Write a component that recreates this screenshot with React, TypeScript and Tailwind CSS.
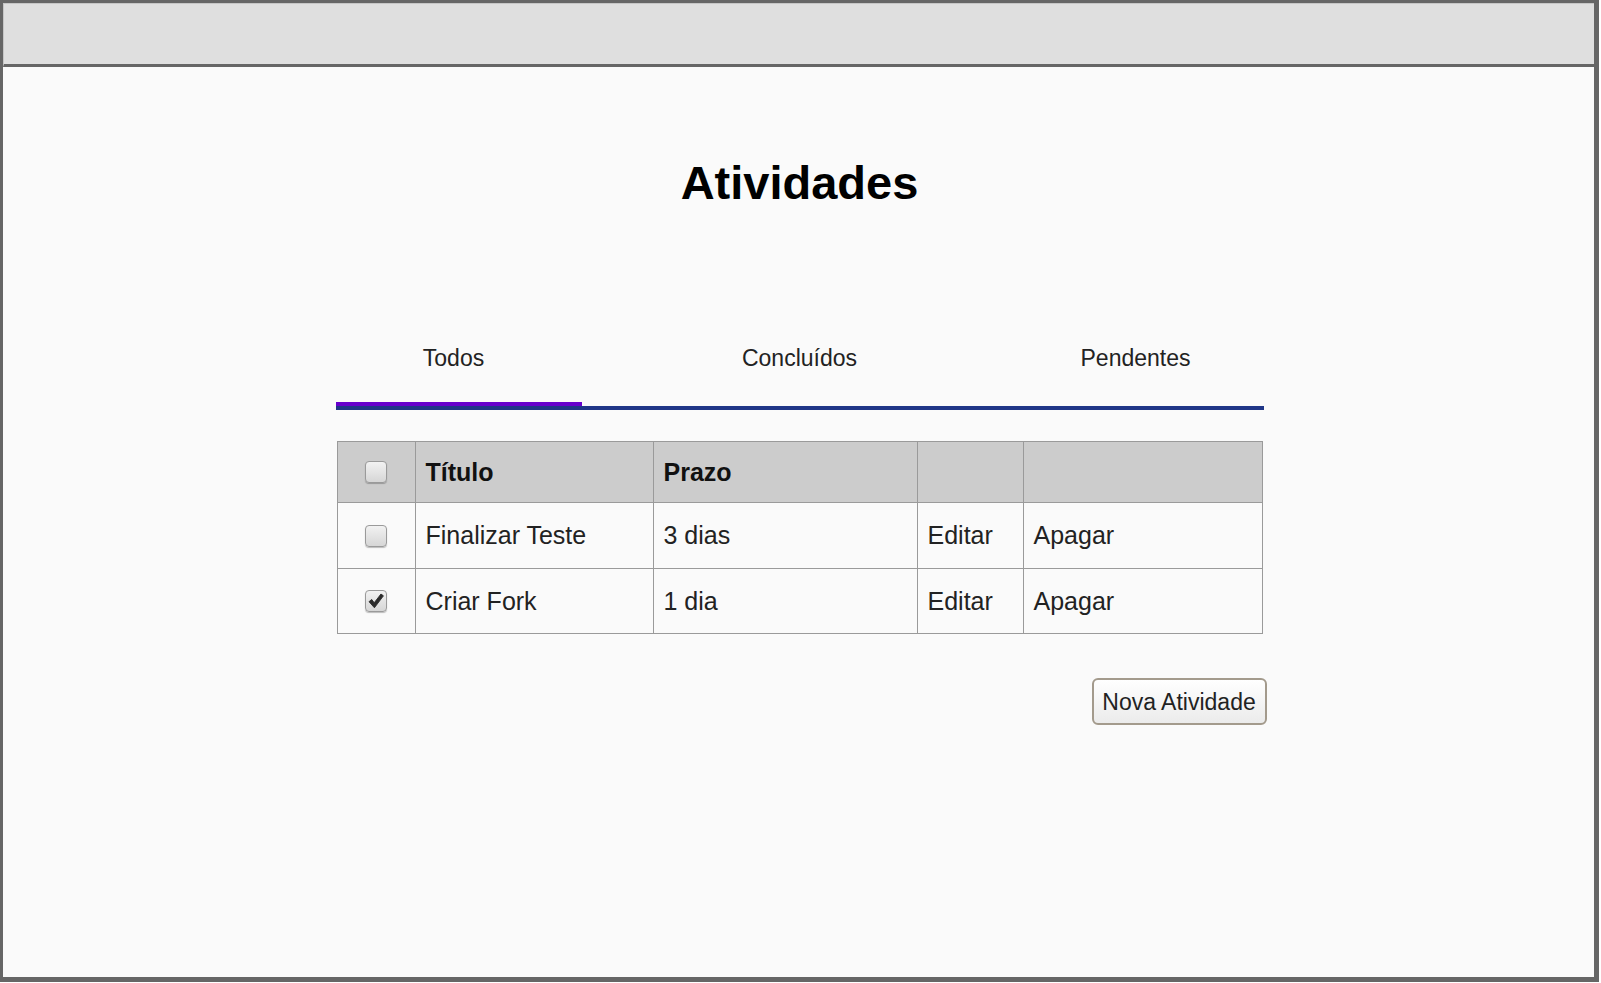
import React from "react";

function Box({ checked = false }: { checked?: boolean }) {
  return (
    <div className="w-[22px] h-[22px] rounded-[4px] border border-[#9a9a9a] bg-gradient-to-b from-[#f2f2f2] to-[#d6d6d6] shadow-[0_1px_1px_rgba(0,0,0,0.25)] flex items-center justify-center">
      {checked && (
        <svg width="18" height="18" viewBox="0 0 16 16">
          <path d="M1.8 8.6 L4.2 6.6 L6.4 9.6 L12.4 1.8 L14.6 3.4 L6.6 14 Z" fill="#2b2b2b" stroke="#2b2b2b" strokeWidth="0.8" strokeLinejoin="round" />
        </svg>
      )}
    </div>
  );
}

const cellBase = "flex items-center pl-[10px] border-r border-[#9a9a9a]";

function Row({
  header = false,
  h,
  last = false,
  checked = false,
  title,
  prazo,
  actions = true,
}: {
  header?: boolean;
  h: string;
  last?: boolean;
  checked?: boolean;
  title: string;
  prazo: string;
  actions?: boolean;
}) {
  const rowCls = `flex ${h} ${last ? "" : "border-b border-[#9a9a9a]"} ${header ? "bg-[#cccccc] font-bold text-[#111]" : "bg-[#fafafa] text-[#222]"}`;
  return (
    <div className={rowCls}>
      <div className="w-[78px] flex items-center justify-center border-r border-[#9a9a9a]">
        <Box checked={checked} />
      </div>
      <div className={`w-[238px] ${cellBase}`}>{title}</div>
      <div className={`w-[264px] ${cellBase}`}>{prazo}</div>
      <div className={`w-[106px] ${cellBase}`}>{actions ? "Editar" : ""}</div>
      <div className="flex-1 flex items-center pl-[10px]">{actions ? "Apagar" : ""}</div>
    </div>
  );
}

export default function App() {
  return (
    <div
      className="w-[1599px] h-[982px] border-l-[3px] border-t-[3px] border-r-[5px] border-b-[5px] border-[#666666] bg-[#fafafa] flex flex-col"
      style={{ fontFamily: '"Liberation Sans", Arial, sans-serif' }}
    >
      <div className="h-[64px] shrink-0 bg-[#dfdfdf] border-t border-l border-[#c6c6c6] border-b-[3px] border-b-[#666666]" />
      <div className="flex-1 flex flex-col items-center pt-[89px] pl-[2px]">
        <h1 className="text-[47px] leading-[53px] font-bold text-black">Atividades</h1>

        <div className="mt-[136px] w-[928px] border-b-[4px] border-[#1f3687]">
          <div className="flex text-[23px] leading-[27px] text-[#222] pb-[30px]">
            <div className="w-[236px] text-center">Todos</div>
            <div className="w-[456px] text-center">Concluídos</div>
            <div className="w-[216px] text-center">Pendentes</div>
          </div>
          <div className="h-[4px] w-[246px] bg-[#6600cc]" />
        </div>

        <div className="mt-[31px] w-[928px] pl-[1px]">
          <div className="w-[926px] border border-[#9a9a9a] text-[25px] leading-[29px]">
            <Row header h="h-[61px]" title="Título" prazo="Prazo" actions={false} />
            <Row h="h-[66px]" title="Finalizar Teste" prazo="3 dias" />
            <Row h="h-[64px]" last checked title="Criar Fork" prazo="1 dia" />
          </div>
        </div>

        <div className="mt-[44px] w-[928px] flex justify-end">
          <button className="mr-[-3px] w-[175px] h-[47px] rounded-[6px] border-2 border-[#a39a8c] bg-gradient-to-b from-white to-[#ebebeb] text-[23px] text-[#222] leading-[27px] pt-[2px]">
            Nova Atividade
          </button>
        </div>
      </div>
    </div>
  );
}
